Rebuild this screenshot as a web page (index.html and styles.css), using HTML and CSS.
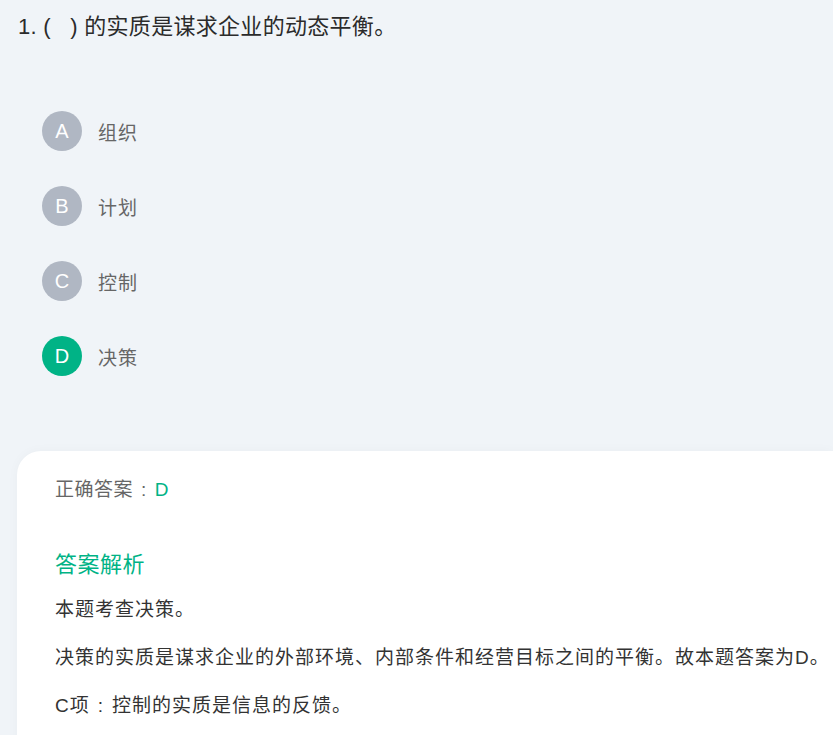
FILE: index.html
```html
<!DOCTYPE html>
<html lang="zh">
<head>
<meta charset="utf-8">
<link rel="stylesheet" href="styles.css">
</head>
<body>
<div class="page">
  <div class="title">1. (&nbsp;&nbsp;&nbsp;) 的实质是谋求企业的动态平衡。</div>
  <ul class="options">
    <li class="option"><span class="badge">A</span><span class="label">组织</span></li>
    <li class="option"><span class="badge">B</span><span class="label">计划</span></li>
    <li class="option"><span class="badge">C</span><span class="label">控制</span></li>
    <li class="option"><span class="badge badge-on">D</span><span class="label">决策</span></li>
  </ul>
  <div class="card">
    <div class="answer">正确答案<span class="colon">:</span><span class="green">D</span></div>
    <div class="heading">答案解析</div>
    <p class="para">本题考查决策。</p>
    <p class="para">决策的实质是谋求企业的外部环境、内部条件和经营目标之间的平衡。故本题答案为D。</p>
    <p class="para">C项<span class="colon">:</span>控制的实质是信息的反馈。</p>
  </div>
</div>
</body>
</html>
```
FILE: styles.css
```css
html, body {
  margin: 0;
  padding: 0;
  background: #f0f4f8;
  overflow: hidden;
}
body {
  font-family: "Liberation Sans", "Noto Sans CJK SC", sans-serif;
  color: #333;
}
.page {
  width: 833px;
  height: 735px;
  overflow: hidden;
}
.title {
  padding: 12px 0 0 18px;
  font-size: 22px;
  line-height: 30px;
  color: #2b2b2b;
  letter-spacing: 0.3px;
  white-space: nowrap;
}
.options {
  list-style: none;
  margin: 0;
  padding: 69px 0 0 42px;
  display: flex;
  flex-direction: column;
  gap: 35px;
}
.option {
  display: flex;
  align-items: center;
  height: 40px;
}
.badge {
  width: 40px;
  height: 40px;
  border-radius: 50%;
  background: #b0b7c3;
  color: #fff;
  font-size: 20px;
  display: flex;
  align-items: center;
  justify-content: center;
}
.badge-on {
  background: #00b386;
}
.label {
  margin-left: 16px;
  font-size: 19px;
  color: #666;
  letter-spacing: 1px;
}
.card {
  margin: 75px 0 0 17px;
  background: #fff;
  border-top-left-radius: 24px;
  padding: 25px 0 0 38px;
  height: 400px;
  box-shadow: 0 0 12px rgba(0, 0, 0, 0.03);
}
.answer {
  font-size: 19px;
  line-height: 28px;
  color: #666;
  letter-spacing: 0.5px;
}
.colon {
  display: inline-block;
  margin: 0 8px 0 8px;
}
.green {
  color: #00b386;
}
.heading {
  margin-top: 46px;
  font-size: 22px;
  line-height: 30px;
  color: #00b386;
  letter-spacing: 0.5px;
}
.para {
  margin: 14px 0 0 0;
  font-size: 19px;
  line-height: 32px;
  color: #333;
  letter-spacing: 1px;
  white-space: nowrap;
}
.para + .para {
  margin-top: 16px;
}
```
